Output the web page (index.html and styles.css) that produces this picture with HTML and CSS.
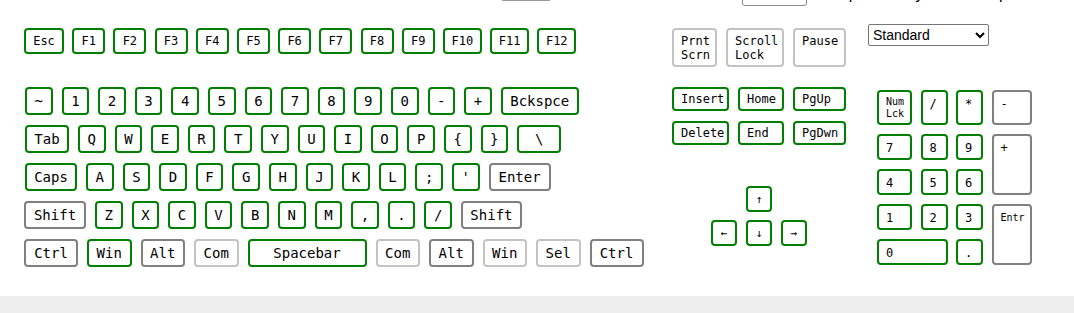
FILE: index.html
```html
<!DOCTYPE html>
<html>
<head>
    <title>Keyboard Map</title>
    <link rel="stylesheet" href="styles.css">
</head>
<body>

    <div class="topbar">
        <span class="tb-input"></span>
        <span class="tb-button"></span>
        <span class="tb-text">Compare a key on the map</span>
    </div>

    <div class="board">

        <!-- main block -->
        <div class="main">
            <div class="frow">
                <div class="key on esc">Esc</div>
                <div class="key on">F1</div>
                <div class="key on">F2</div>
                <div class="key on">F3</div>
                <div class="key on">F4</div>
                <div class="key on">F5</div>
                <div class="key on">F6</div>
                <div class="key on">F7</div>
                <div class="key on">F8</div>
                <div class="key on">F9</div>
                <div class="key on wide">F10</div>
                <div class="key on wide">F11</div>
                <div class="key on wide">F12</div>
            </div>

            <div class="rows">
                <div class="row indent">
                    <div class="key on">~</div>
                    <div class="key on">1</div>
                    <div class="key on">2</div>
                    <div class="key on">3</div>
                    <div class="key on">4</div>
                    <div class="key on">5</div>
                    <div class="key on">6</div>
                    <div class="key on">7</div>
                    <div class="key on">8</div>
                    <div class="key on">9</div>
                    <div class="key on">0</div>
                    <div class="key on">-</div>
                    <div class="key on">+</div>
                    <div class="key on bksp">Bckspce</div>
                </div>
                <div class="row indent">
                    <div class="key on tab">Tab</div>
                    <div class="key on">Q</div>
                    <div class="key on">W</div>
                    <div class="key on">E</div>
                    <div class="key on">R</div>
                    <div class="key on">T</div>
                    <div class="key on">Y</div>
                    <div class="key on">U</div>
                    <div class="key on">I</div>
                    <div class="key on">O</div>
                    <div class="key on">P</div>
                    <div class="key on">{</div>
                    <div class="key on">}</div>
                    <div class="key on tab">\</div>
                </div>
                <div class="row indent">
                    <div class="key on caps">Caps</div>
                    <div class="key on">A</div>
                    <div class="key on">S</div>
                    <div class="key on">D</div>
                    <div class="key on">F</div>
                    <div class="key on">G</div>
                    <div class="key on">H</div>
                    <div class="key on">J</div>
                    <div class="key on">K</div>
                    <div class="key on">L</div>
                    <div class="key on">;</div>
                    <div class="key on">'</div>
                    <div class="key off enter">Enter</div>
                </div>
                <div class="row">
                    <div class="key off shift">Shift</div>
                    <div class="key on">Z</div>
                    <div class="key on">X</div>
                    <div class="key on">C</div>
                    <div class="key on">V</div>
                    <div class="key on">B</div>
                    <div class="key on">N</div>
                    <div class="key on">M</div>
                    <div class="key on">,</div>
                    <div class="key on">.</div>
                    <div class="key on">/</div>
                    <div class="key off rshift">Shift</div>
                </div>
                <div class="row">
                    <div class="key off ctrl">Ctrl</div>
                    <div class="key on mod">Win</div>
                    <div class="key off mod">Alt</div>
                    <div class="key dim mod">Com</div>
                    <div class="key on space">Spacebar</div>
                    <div class="key dim mod">Com</div>
                    <div class="key off mod">Alt</div>
                    <div class="key dim mod">Win</div>
                    <div class="key dim mod">Sel</div>
                    <div class="key off ctrl">Ctrl</div>
                </div>
            </div>
        </div>

        <!-- navigation block -->
        <div class="nav">
            <div class="sys">
                <div class="key dim prnt">Prnt<br>Scrn</div>
                <div class="key dim scroll">Scroll<br>Lock</div>
                <div class="key dim pause">Pause</div>
            </div>

            <div class="navkeys">
                <div class="key on">Insert</div>
                <div class="key on">Home</div>
                <div class="key on">PgUp</div>
                <div class="key on">Delete</div>
                <div class="key on">End</div>
                <div class="key on">PgDwn</div>
            </div>

            <div class="arrows">
                <div class="arrow-row">
                    <div class="key on">&#8593;</div>
                </div>
                <div class="arrow-row">
                    <div class="key on">&#8592;</div>
                    <div class="key on">&#8595;</div>
                    <div class="key on">&#8594;</div>
                </div>
            </div>
        </div>

        <!-- layout picker and number pad -->
        <div class="side">
            <select class="layout">
                <option>Standard</option>
                <option>Compact</option>
            </select>

            <div class="numpad">
                <div class="key on small">Num<br>Lck</div>
                <div class="key on">/</div>
                <div class="key on">*</div>
                <div class="key off">-</div>
                <div class="key on">7</div>
                <div class="key on">8</div>
                <div class="key on">9</div>
                <div class="key off plus">+</div>
                <div class="key on">4</div>
                <div class="key on">5</div>
                <div class="key on">6</div>
                <div class="key on">1</div>
                <div class="key on">2</div>
                <div class="key on">3</div>
                <div class="key off small entr">Entr</div>
                <div class="key on zero">0</div>
                <div class="key on">.</div>
            </div>
        </div>

    </div>

    <div class="footer"></div>

</body>
</html>
```

FILE: styles.css
```css
body {
    margin: 0;
    padding: 0;
    background-color: #ffffff;
    font-family: "DejaVu Sans Mono", "Liberation Mono", monospace;
    color: #000000;
}

/* cut off controls above the keyboard */
.topbar {
    display: flex;
    align-items: flex-start;
    height: 7px;
    overflow: hidden;
}

.tb-input {
    margin-left: 501px;
    margin-top: -21px;
    width: 50px;
    height: 22px;
    box-sizing: border-box;
    border: 1px solid #999999;
    border-radius: 2px;
}

.tb-button {
    margin-left: 191px;
    margin-top: -18px;
    width: 65px;
    height: 24px;
    box-sizing: border-box;
    border: 1px solid #888888;
    border-radius: 3px;
}

.tb-text {
    margin-left: 8px;
    margin-top: -15px;
    font-family: "Liberation Sans", Arial, sans-serif;
    font-size: 16px;
    line-height: 18px;
    white-space: nowrap;
}

.board {
    display: flex;
    align-items: flex-start;
}

/* keys */
.key {
    box-sizing: border-box;
    display: flex;
    align-items: center;
    justify-content: center;
    background-color: #ffffff;
    border: 2px solid #008000;
    border-radius: 4px;
    white-space: nowrap;
}

.key.on {
    border-color: #008000;
}

.key.off {
    border-color: #808080;
}

.key.dim {
    border-color: #c3c3c3;
}

/* main block */
.main {
    width: 648px;
    padding: 21px 0 0 24px;
}

.frow {
    display: flex;
    gap: 8.2px;
}

.frow .key {
    width: 33px;
    height: 26px;
    font-size: 12px;
}

.frow .esc {
    width: 40px;
}

.frow .wide {
    width: 39px;
}

.rows {
    margin-top: 33px;
    display: flex;
    flex-direction: column;
    gap: 10px;
}

.row {
    display: flex;
    gap: 9px;
}

.row.indent {
    padding-left: 1px;
}

.row .key {
    width: 27.6px;
    height: 28px;
    font-size: 14px;
}

.row .bksp { width: 78px; }
.row .tab { width: 44px; }
.row .caps { width: 52px; }
.row .enter { width: 62px; }
.row .shift { width: 62px; }
.row .rshift { width: 61px; }
.row .ctrl { width: 54px; }
.row .mod { width: 44.5px; }
.row .space { width: 119px; }

/* navigation block */
.nav {
    width: 196px;
    padding-top: 21px;
}

.sys {
    display: flex;
    gap: 9px;
}

.sys .key {
    height: 39px;
    font-size: 12px;
    line-height: 14px;
    align-items: flex-start;
    justify-content: flex-start;
    padding: 4px 0 0 7px;
}

.sys .prnt { width: 45px; }
.sys .scroll { width: 58px; }
.sys .pause { width: 53px; }

.navkeys {
    margin-top: 20px;
    display: grid;
    grid-template-columns: 57px 46px 53px;
    grid-auto-rows: 24px;
    gap: 10px 9px;
}

.navkeys .key {
    font-size: 12px;
    justify-content: flex-start;
    padding-left: 7px;
}

.arrows {
    width: 174px;
    margin-top: 41px;
    display: flex;
    flex-direction: column;
    align-items: center;
    gap: 8px;
}

.arrow-row {
    display: flex;
    gap: 9px;
}

.arrow-row .key {
    width: 26px;
    height: 26px;
    font-size: 11px;
}

/* picker and number pad */
.layout {
    margin-top: 17px;
    width: 121px;
    height: 22px;
    font-family: "Liberation Sans", Arial, sans-serif;
    font-size: 14px;
    border: 1px solid #767676;
    border-radius: 2px;
    background-color: #ffffff;
    color: #000000;
}

.numpad {
    margin: 44px 0 0 9px;
    display: grid;
    grid-template-columns: 35px 27px 27px 40px;
    grid-template-rows: 35px repeat(4, 26px);
    gap: 9px 8.5px;
}

.numpad .key {
    font-size: 12px;
    line-height: 14px;
    align-items: flex-start;
    justify-content: flex-start;
    padding: 5px 0 0 7px;
}

.numpad .small {
    font-size: 10px;
    line-height: 12px;
    padding-top: 4px;
}

.numpad .plus {
    grid-row: 2 / span 2;
    grid-column: 4;
}

.numpad .entr {
    grid-row: 4 / span 2;
    grid-column: 4;
    padding-top: 6px;
}

.numpad .zero {
    grid-column: 1 / span 2;
}

.footer {
    margin-top: 29px;
    height: 17px;
    background-color: #eeeeee;
}
```
